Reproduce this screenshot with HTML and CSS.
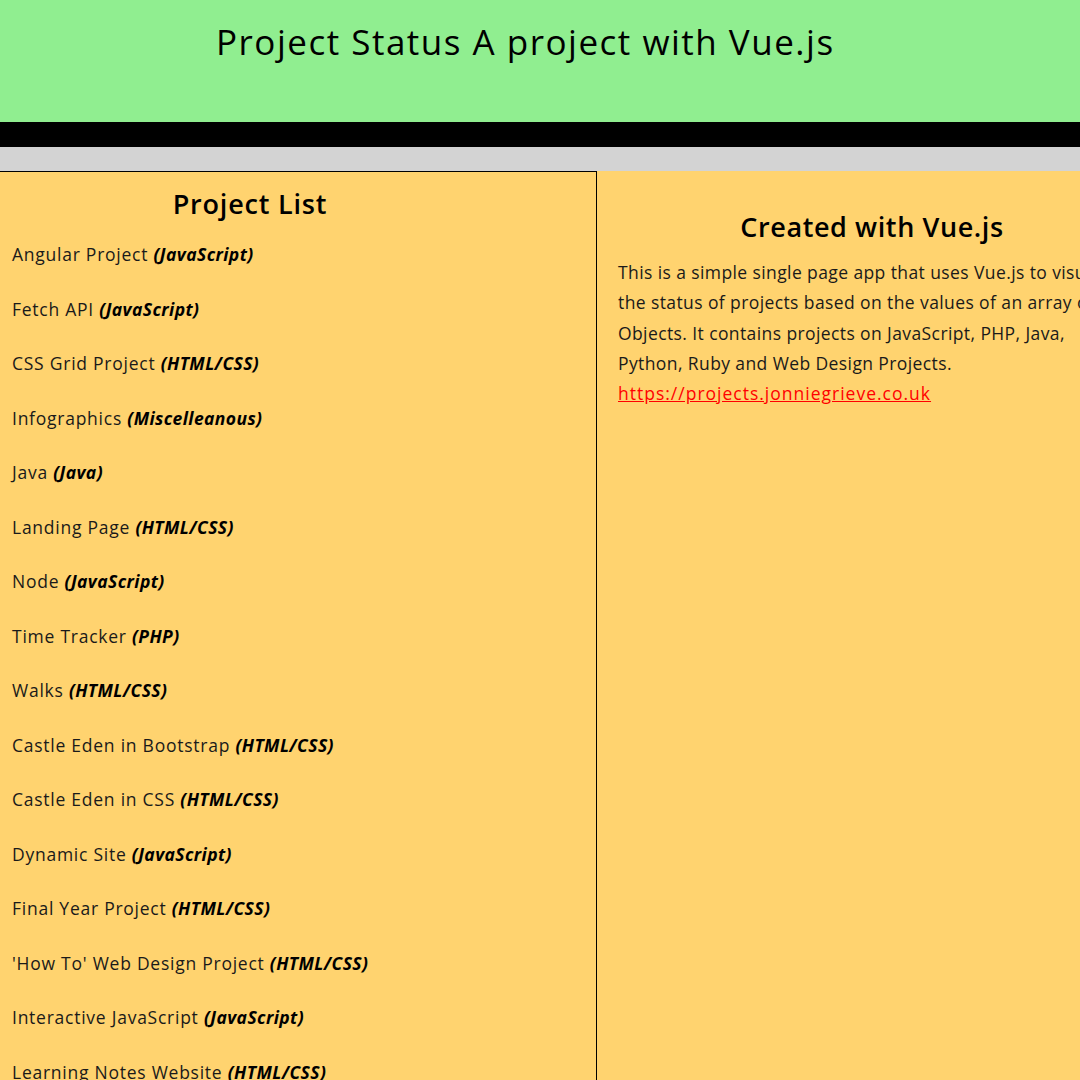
FILE: index.html
```html
<!DOCTYPE html>
<html lang="en">
<head>
<meta charset="utf-8">
<title>Project Status</title>
<link rel="stylesheet" href="styles.css">
</head>
<body>
<header class="site-header">
  <h1 class="site-title">Project Status A project with Vue.js</h1>
</header>
<div class="nav-bar"></div>
<div class="grey-band"></div>
<main class="main">
  <section class="project-list">
    <h2 class="panel-title">Project List</h2>
    <ul class="projects">
      <li>Angular Project <em>(JavaScript)</em></li>
      <li>Fetch API <em>(JavaScript)</em></li>
      <li>CSS Grid Project <em>(HTML/CSS)</em></li>
      <li>Infographics <em>(Miscelleanous)</em></li>
      <li>Java <em>(Java)</em></li>
      <li>Landing Page <em>(HTML/CSS)</em></li>
      <li>Node <em>(JavaScript)</em></li>
      <li>Time Tracker <em>(PHP)</em></li>
      <li>Walks <em>(HTML/CSS)</em></li>
      <li>Castle Eden in Bootstrap <em>(HTML/CSS)</em></li>
      <li>Castle Eden in CSS <em>(HTML/CSS)</em></li>
      <li>Dynamic Site <em>(JavaScript)</em></li>
      <li>Final Year Project <em>(HTML/CSS)</em></li>
      <li>'How To' Web Design Project <em>(HTML/CSS)</em></li>
      <li>Interactive JavaScript <em>(JavaScript)</em></li>
      <li>Learning Notes Website <em>(HTML/CSS)</em></li>
    </ul>
  </section>
  <section class="about">
    <h2 class="about-title">Created with Vue.js</h2>
    <p class="about-text">This is a simple single page app that uses Vue.js to visualise<br>the status of projects based on the values of an array of<br>Objects. It contains projects on JavaScript, PHP, Java,<br>Python, Ruby and Web Design Projects.<br><a class="about-link" href="#">https://projects.jonniegrieve.co.uk</a></p>
  </section>
</main>
</body>
</html>
```

FILE: styles.css
```css
html, body {
  margin: 0;
  padding: 0;
  overflow: hidden;
  height: 1080px;
}
body {
  font-family: "Open Sans", "Lato", sans-serif;
  color: #1a1a1a;
  background: #ffd36f;
}
.site-header {
  background: #90ee90;
  height: 122px;
  box-sizing: border-box;
  padding-top: 17px;
  padding-left: 216px;
}
.site-title {
  margin: 0;
  font-size: 35px;
  font-weight: 500;
  line-height: 50px;
  letter-spacing: 1.5px;
  color: #000;
  white-space: nowrap;
}
.nav-bar {
  background: #000;
  height: 25px;
}
.grey-band {
  background: #d3d3d3;
  height: 24px;
}
.main {
  display: grid;
  grid-template-columns: 597px 560px;
  width: 1157px;
}
.project-list {
  border-top: 1px solid #000;
  border-right: 1px solid #000;
  background: #ffd36f;
  min-height: 909px;
}
.panel-title {
  margin: 12px 0 0;
  padding-right: 96px;
  text-align: center;
  font-size: 27px;
  font-weight: 600;
  line-height: 40px;
  letter-spacing: 0.8px;
  color: #000;
}
.projects {
  list-style: none;
  margin: 0;
  padding: 0 0 0 12px;
  display: flex;
  flex-direction: column;
}
.projects li {
  font-size: 17.5px;
  line-height: 24px;
  height: 24px;
  padding-bottom: 30.5px;
  letter-spacing: 0.75px;
  white-space: nowrap;
}
.projects li:first-child { margin-top: 18px; }
.projects em {
  font-weight: 700;
  font-style: italic;
  letter-spacing: 0.4px;
  color: #000;
}
.about {
  background: #ffd36f;
  padding: 36px 0 0 21px;
}
.about-title {
  margin: 0;
  text-align: center;
  font-size: 27px;
  font-weight: 600;
  line-height: 40px;
  letter-spacing: 0.6px;
  color: #000;
  padding-right: 31px;
}
.about-text {
  margin: 10px 0 0;
  font-size: 17.5px;
  line-height: 30.3px;
  letter-spacing: 0.4px;
  white-space: nowrap;
}
.about-link {
  color: #ff0000;
  text-decoration: underline;
  letter-spacing: 1px;
}
```
